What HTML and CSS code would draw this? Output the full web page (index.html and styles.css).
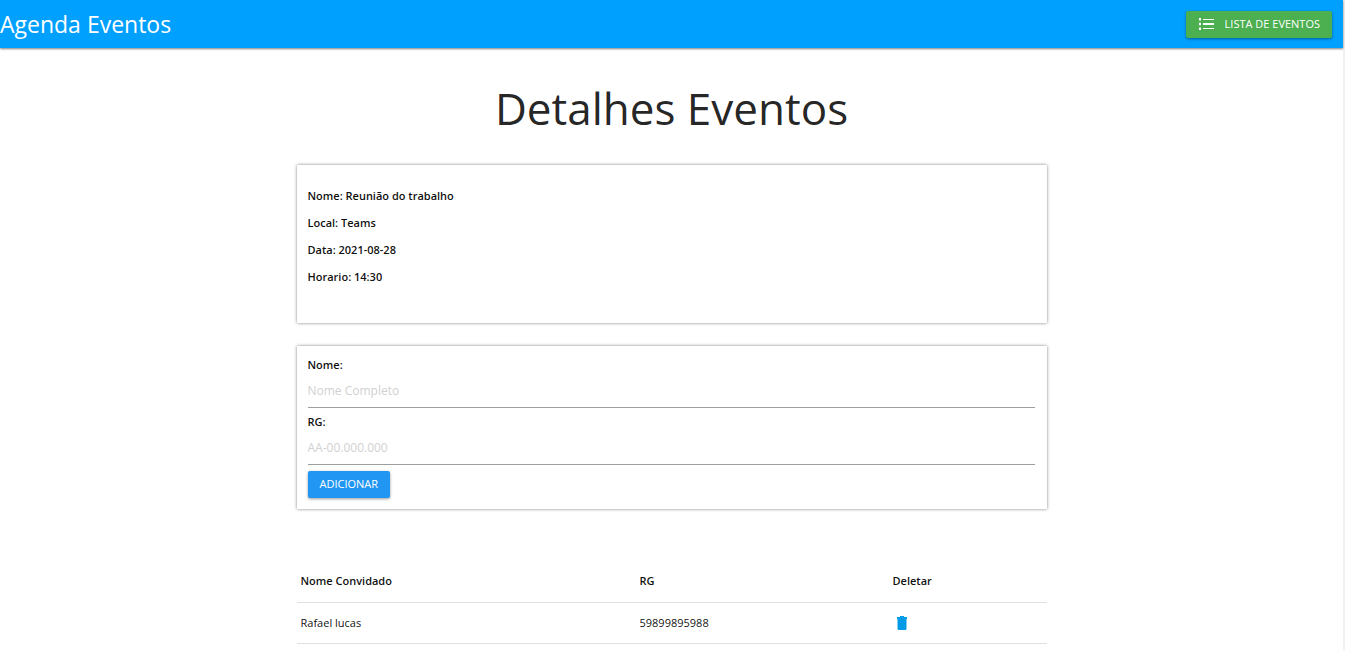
FILE: index.html
```html
<!DOCTYPE html>
<html lang="pt-BR">
<head>
<meta charset="utf-8">
<title>Agenda Eventos</title>
<link rel="stylesheet" href="styles.css">
</head>
<body>
<div class="page">
  <nav class="navbar">
    <a class="brand" href="#">Agenda Eventos</a>
    <a class="btn btn-list" href="#">
      <svg class="list-icon" viewBox="0 0 15 12" aria-hidden="true"><path d="M0 0h2v2.500H0zM0 4.800h2v2.400H0zM0 9.500h2V12H0zM4 1h11v1H4zM4 5h11v2H4zM4 10h11v1H4z"/></svg>
      <span>LISTA DE EVENTOS</span>
    </a>
  </nav>
  <main class="container">
    <h1 class="title">Detalhes Eventos</h1>
    <section class="card details">
      <p>Nome: Reunião do trabalho</p>
      <p>Local: Teams</p>
      <p>Data: 2021-08-28</p>
      <p>Horario: 14:30</p>
    </section>
    <form class="card guest-form">
      <label for="nome">Nome:</label>
      <input id="nome" type="text" placeholder="Nome Completo">
      <label for="rg">RG:</label>
      <input id="rg" type="text" placeholder="AA-00.000.000">
      <button class="btn btn-add" type="button">ADICIONAR</button>
    </form>
    <table class="guests">
      <thead>
        <tr><th class="col-name">Nome Convidado</th><th class="col-rg">RG</th><th>Deletar</th></tr>
      </thead>
      <tbody>
        <tr>
          <td>Rafael lucas</td>
          <td>59899895988</td>
          <td><a class="delete" href="#" aria-label="Deletar"><svg viewBox="0 0 10 14" aria-hidden="true"><path d="M0 1h3V0h4v1h3v2H0zM0.500 3h9v9.500Q9.500 14 8 14H2Q0.500 14 0.500 12.500z"/></svg></a></td>
        </tr>
      </tbody>
    </table>
  </main>
</div>
</body>
</html>
```
FILE: styles.css
```css
* { box-sizing: border-box; }
html { overflow: hidden; }
body {
  margin: 0;
  background: #fff;
  color: rgba(0, 0, 0, 0.87);
  font-family: "Open Sans", "Noto Sans", sans-serif;
  font-size: 11px;
  line-height: 16px;
}
.page {
  min-height: 100vh;
  border-right: 2px solid #f1f1f1;
}
.navbar {
  display: flex;
  align-items: center;
  justify-content: space-between;
  height: 48px;
  padding-right: 11px;
  background: #00a0ff;
  box-shadow: 0 1px 2px rgba(0, 0, 0, 0.5);
}
.brand {
  color: #fff;
  font-size: 23px;
  line-height: 48px;
  text-decoration: none;
}
.btn {
  display: inline-flex;
  align-items: center;
  height: 27px;
  padding: 0 12px 1px;
  border: 0;
  border-radius: 2px;
  color: #fff;
  font-family: inherit;
  font-size: 11px;
  line-height: 26px;
  text-decoration: none;
  box-shadow: 0 1px 3px rgba(0, 0, 0, 0.4);
}
.btn-list {
  gap: 11px;
  background: #4caf50;
}
.list-icon {
  width: 15px;
  height: 12px;
  margin-left: 1px;
  fill: #fff;
}
.container {
  max-width: 750px;
  margin: 0 auto;
}
.title {
  margin: 32px 0 28px;
  font-size: 44px;
  font-weight: 400;
  line-height: 57px;
  text-align: center;
}
.card {
  padding: 11px 12px 11px 11px;
  color: rgba(0, 0, 0, 0.95);
  font-weight: 600;
  box-shadow: 0 0 3px rgba(0, 0, 0, 0.5);
}
.details {
  min-height: 158px;
  padding-top: 23px;
}
.details p { margin: 0 0 11px; }
.guest-form { margin-top: 23px; }
.guest-form label { display: block; }
.guest-form input {
  display: block;
  width: 100%;
  height: 35px;
  margin: 0 0 6px;
  padding: 0;
  border: 0;
  border-bottom: 1px solid #9e9e9e;
  background: transparent;
  font-family: inherit;
  font-size: 12px;
}
.guest-form input::placeholder { color: #d1d1d1; }
.btn-add { background: #2196f3; }
.guests {
  width: 100%;
  margin-top: 52px;
  border-collapse: collapse;
  color: rgba(0, 0, 0, 0.95);
}
.guests tr {
  height: 41px;
  border-bottom: 1px solid #e0e0e0;
}
.guests th,
.guests td {
  padding: 0 4px;
  text-align: left;
}
.guests th { font-weight: 600; }
.col-name { width: 339px; }
.col-rg { width: 253px; }
.delete {
  display: block;
  width: 10px;
  height: 14px;
  margin-left: 4px;
}
.delete svg {
  display: block;
  width: 10px;
  height: 14px;
  fill: #039be5;
}
```
